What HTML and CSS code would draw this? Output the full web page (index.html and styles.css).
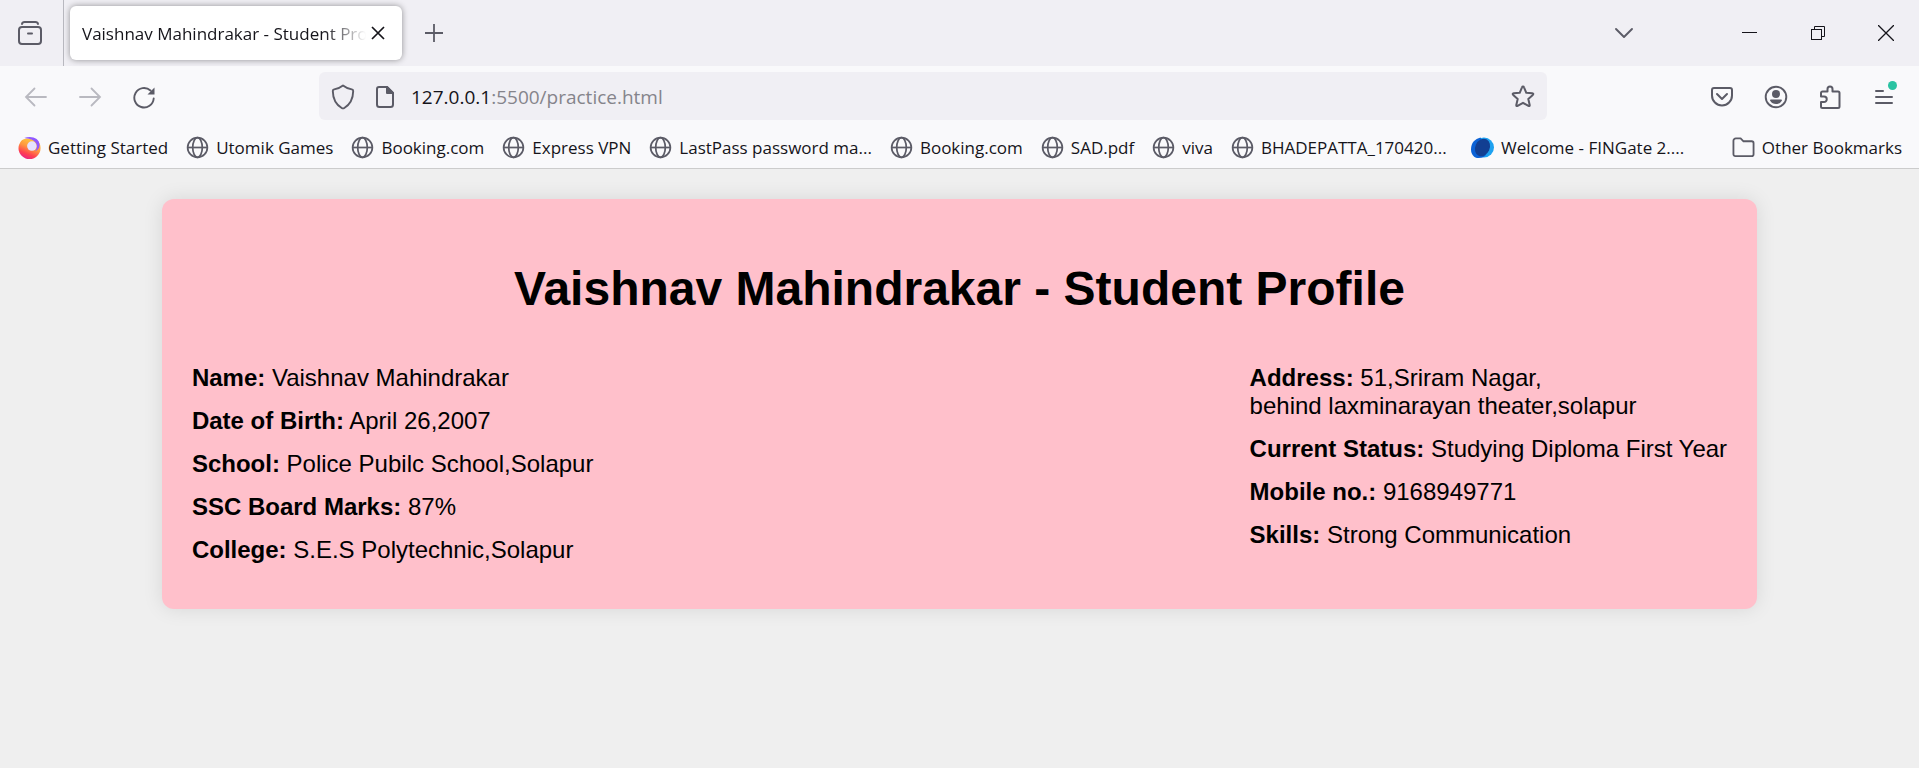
FILE: index.html
```html
<!DOCTYPE html>
<html lang="en">
<head>
<meta charset="utf-8">
<meta name="viewport" content="width=device-width, initial-scale=1">
<title>Vaishnav Mahindrakar - Student Profile</title>
<link rel="stylesheet" href="styles.css">
</head>
<body>
<svg class="defs" aria-hidden="true">
  <symbol id="globe" viewBox="0 0 24 24"><g fill="none" stroke="currentColor" stroke-width="1.8"><circle cx="12" cy="12" r="10.3"/><ellipse cx="12" cy="12" rx="5" ry="10.3"/><path d="M2 12h20"/></g></symbol>
</svg>
<header class="browser">
  <div class="tabbar">
    <button class="icon-btn view" aria-label="Firefox View"><svg width="24" height="24" viewBox="0 0 24 24" fill="none" stroke="currentColor" stroke-width="2" stroke-linecap="round"><path d="M4 3c.3-1.500 1.200-2 2.500-2h11c1.300 0 2.200.5 2.500 2"/><rect x="1" y="6" width="22" height="17" rx="3"/><path d="M10 12.500h4"/></svg></button>
    <div class="tab">
      <span class="tab-title">Vaishnav Mahindrakar - Student Profile</span>
      <button class="tab-close" aria-label="Close tab"><svg width="14" height="14" viewBox="0 0 14 14" fill="none" stroke="currentColor" stroke-width="1.700"><path d="M1 1l12 12M13 1L1 13"/></svg></button>
    </div>
    <button class="icon-btn new-tab" aria-label="New tab"><svg width="18" height="18" viewBox="0 0 18 18" fill="none" stroke="currentColor" stroke-width="1.800"><path d="M9 0v18M0 9h18"/></svg></button>
    <div class="window-controls">
      <button class="icon-btn list-tabs" aria-label="List all tabs"><svg width="20" height="12" viewBox="0 0 20 12" fill="none" stroke="currentColor" stroke-width="1.900" stroke-linecap="round" stroke-linejoin="round"><path d="M2 2l8 8 8-8"/></svg></button>
      <button class="win-btn" aria-label="Minimize"><svg width="16" height="16" viewBox="0 0 16 16" fill="none" stroke="currentColor"><path d="M1 7.500h15"/></svg></button>
      <button class="win-btn" aria-label="Restore"><svg width="16" height="16" viewBox="0 0 16 16" fill="none" stroke="currentColor"><rect x="1.500" y="4.500" width="10" height="10"/><path d="M4.500 4.500v-3h10v10h-3"/></svg></button>
      <button class="win-btn" aria-label="Close"><svg width="16" height="16" viewBox="0 0 16 16" fill="none" stroke="currentColor" stroke-width="1.300"><path d="M0 0l16 16M16 0L0 16"/></svg></button>
    </div>
  </div>
  <div class="toolbar">
    <div class="nav">
      <button class="icon-btn off" aria-label="Back"><svg width="24" height="24" viewBox="0 0 24 24" fill="none" stroke="currentColor" stroke-width="1.800" stroke-linecap="round"><path d="M22 12H2M10.500 3.500L2 12l8.500 8.500"/></svg></button>
      <button class="icon-btn off" aria-label="Forward"><svg width="24" height="24" viewBox="0 0 24 24" fill="none" stroke="currentColor" stroke-width="1.800" stroke-linecap="round"><path d="M2 12h20M13.500 3.500L22 12l-8.500 8.500"/></svg></button>
      <button class="icon-btn" aria-label="Reload"><svg width="24" height="24" viewBox="0 0 24 24" fill="none" stroke="currentColor" stroke-width="1.900" stroke-linecap="round"><path d="M18.500 5.500A9.700 9.700 0 1 0 21.700 13.500"/><path d="M22.500 2.500v7h-7z" fill="currentColor" stroke="none"/></svg></button>
    </div>
    <div class="urlbar">
      <svg width="24" height="26" viewBox="0 0 24 26" fill="none" stroke="currentColor" stroke-width="1.900" stroke-linejoin="round"><path d="M12 1.500C9 3.900 5.500 5 3.200 5.400Q1.800 5.700 1.800 7C1.900 14.500 5 20.500 10.700 24Q12 24.800 13.300 24C19 20.500 22.100 14.500 22.200 7Q22.200 5.700 20.800 5.400C18.500 5 15 3.900 12 1.500z"/></svg>
      <svg width="20" height="24" viewBox="0 0 20 24" fill="none" stroke="currentColor" stroke-width="2" stroke-linejoin="round"><path d="M4 2h8l6 6v11.500a2.500 2.500 0 0 1-2.500 2.500h-11A2.500 2.500 0 0 1 2 19.500V4a2 2 0 0 1 2-2z"/><path d="M12 2v6h6z" fill="currentColor"/></svg>
      <a class="url" href="#">127.0.0.1<span class="url-rest">:5500/practice.html</span></a>
      <button class="star" aria-label="Bookmark this page"><svg width="24" height="24" viewBox="0 0 24 24" fill="none" stroke="currentColor" stroke-width="2" stroke-linejoin="round"><path d="M12 1.500q.7 0 1 .8l2.300 5.500 6 .5q1.700.3.500 1.600l-4.500 4 1.400 6q.2 1.700-1.300 1L12 17.800l-5.400 3.100q-1.500.7-1.300-1l1.400-6-4.500-4q-1.200-1.300.5-1.600l6-.5L11 2.300q.3-.8 1-.8z"/></svg></button>
    </div>
    <div class="actions">
      <button class="icon-btn" aria-label="Save to Pocket"><svg width="24" height="24" viewBox="0 0 24 24" fill="none" stroke="currentColor" stroke-width="2" stroke-linecap="round" stroke-linejoin="round"><path d="M4 3h16a2 2 0 0 1 2 2v5.500a10 10 0 0 1-20 0V5a2 2 0 0 1 2-2z"/><path d="M7 9l5 5 5-5"/></svg></button>
      <button class="icon-btn" aria-label="Account"><svg width="24" height="24" viewBox="0 0 24 24" fill="currentColor"><circle cx="12" cy="12" r="10.300" fill="none" stroke="currentColor" stroke-width="1.900"/><circle cx="12" cy="9" r="4"/><path d="M7 14.500h10q1.500 0 .8 1.200C16.500 18 14.500 19 12 19s-4.500-1-5.800-3.300Q5.500 14.500 7 14.500z"/></svg></button>
      <button class="icon-btn" aria-label="Extensions"><svg width="24" height="26" viewBox="0 0 24 26" fill="none" stroke="currentColor" stroke-width="2" stroke-linejoin="round"><path d="M9.500 7.500V5a2.500 2.500 0 0 1 5 0v2.500H20a1.500 1.500 0 0 1 1.500 1.500v13.500A1.500 1.500 0 0 1 20 24H4.500A1.500 1.500 0 0 1 3 22.500V18h3a2.500 2.500 0 0 0 0-5.500H3V9a1.500 1.500 0 0 1 1.500-1.500z"/></svg></button>
      <button class="icon-btn menu" aria-label="Application menu"><svg width="20" height="18" viewBox="0 0 20 18" fill="none" stroke="currentColor" stroke-width="2" stroke-linecap="round"><path d="M2 3h7M2 9h16M2 15h16"/></svg><span class="badge"></span></button>
    </div>
  </div>
  <nav class="bookmarks" aria-label="Bookmarks">
    <a href="#"><svg viewBox="0 0 24 24"><defs><linearGradient id="fox" x1=".75" y1="0" x2=".3" y2="1"><stop offset="0" stop-color="#ffd43c"/><stop offset=".45" stop-color="#ff9640"/><stop offset=".75" stop-color="#ff4050"/><stop offset="1" stop-color="#e8208a"/></linearGradient></defs><path d="M4 4.500C7 2.500 11 2 14 3.500c6 0 9.500 3.500 9.500 8.500A11.500 11.500 0 1 1 4 4.500z" fill="url(#fox)"/><circle cx="14.500" cy="10.500" r="5" fill="#e6e2ff"/><path d="M6.500 2.200C14-.8 23 2.500 22.500 10c-.3 3-2 5-4.500 6 2-3 2.500-6.500.5-9C15.500 3.500 11 2.600 6.500 2.200z" fill="#9059ff"/></svg><span>Getting Started</span></a>
    <a href="#"><svg><use href="#globe"/></svg><span>Utomik Games</span></a>
    <a href="#"><svg><use href="#globe"/></svg><span>Booking.com</span></a>
    <a href="#"><svg><use href="#globe"/></svg><span>Express VPN</span></a>
    <a href="#"><svg><use href="#globe"/></svg><span class="long">LastPass password ma...</span></a>
    <a href="#"><svg><use href="#globe"/></svg><span>Booking.com</span></a>
    <a href="#"><svg><use href="#globe"/></svg><span>SAD.pdf</span></a>
    <a href="#"><svg><use href="#globe"/></svg><span>viva</span></a>
    <a href="#"><svg><use href="#globe"/></svg><span class="long">BHADEPATTA_170420...</span></a>
    <a href="#"><svg viewBox="0 0 24 24"><circle cx="13.500" cy="12" r="10.500" fill="#1da1f0"/><path d="M10 1.500C4 3 0 7 0 14c0 5 3 9 8 9 4 0 7-2 8-4z" fill="#0b62d6"/><ellipse cx="12" cy="12" rx="7.500" ry="9.500" transform="rotate(25 12 12)" fill="#123f92"/></svg><span class="long">Welcome - FINGate 2....</span></a>
    <a class="other" href="#"><svg viewBox="0 0 24 24" fill="none" stroke="currentColor" stroke-width="1.900" stroke-linejoin="round"><path d="M4 2.500h5l3 3h8.500a2 2 0 0 1 2 2v11.500a2 2 0 0 1-2 2h-17a2 2 0 0 1-2-2V5A2.500 2.500 0 0 1 4 2.500z"/></svg><span>Other Bookmarks</span></a>
  </nav>
</header>
<main class="profile">
  <h1>Vaishnav Mahindrakar - Student Profile</h1>
  <div class="columns">
    <section>
      <p><strong>Name:</strong> Vaishnav Mahindrakar</p>
      <p><strong>Date of Birth:</strong> April 26,2007</p>
      <p><strong>School:</strong> Police Pubilc School,Solapur</p>
      <p><strong>SSC Board Marks:</strong> 87%</p>
      <p><strong>College:</strong> S.E.S Polytechnic,Solapur</p>
    </section>
    <section>
      <p><strong>Address:</strong> 51,Sriram Nagar,<br>behind laxminarayan theater,solapur</p>
      <p><strong>Current Status:</strong> Studying Diploma First Year</p>
      <p><strong>Mobile no.:</strong> 9168949771</p>
      <p><strong>Skills:</strong> Strong Communication</p>
    </section>
  </div>
</main>
</body>
</html>
```
FILE: styles.css
```css
body {
  margin: 0;
  background: #efefef;
  color: #000;
  font-family: "Liberation Sans", Arial, sans-serif;
}
button {
  padding: 0;
  border: 0;
  background: none;
  color: inherit;
  font: inherit;
}
svg { display: block; flex: none; }
.defs { position: absolute; width: 0; height: 0; }

.browser {
  background: #f9f9fb;
  border-bottom: 1px solid #ccc;
  color: #5b5b66;
  font-family: "Open Sans", "Noto Sans", sans-serif;
  font-size: 17px;
}
.icon-btn {
  display: flex;
  align-items: center;
  justify-content: center;
  width: 54px;
  height: 48px;
}
.tabbar {
  display: flex;
  align-items: center;
  height: 66px;
  background: #f0eff4;
}
.view {
  flex: none;
  width: 64px;
  height: 66px;
  padding-right: 4px;
  border-right: 1px solid #b8b8bf;
}
.tab {
  display: flex;
  align-items: center;
  box-sizing: border-box;
  width: 332px;
  height: 54px;
  margin-left: 6px;
  padding: 0 17px 0 12px;
  gap: 5px;
  border-radius: 6px;
  background: #fff;
  box-shadow: 0 0 6px rgba(0, 0, 0, .4);
  color: #15141a;
}
.tab-title {
  flex: 1;
  overflow: hidden;
  white-space: nowrap;
  -webkit-mask-image: linear-gradient(to left, transparent, #000 42px);
  mask-image: linear-gradient(to left, transparent, #000 42px);
}
.new-tab { width: 64px; }
.window-controls {
  display: flex;
  align-items: center;
  margin-left: auto;
  color: #15141a;
}
.list-tabs { margin-right: 63px; color: #5b5b66; }
.win-btn {
  display: flex;
  align-items: center;
  justify-content: center;
  width: 69px;
  height: 48px;
}
.win-btn:last-child { width: 67px; }

.toolbar {
  display: flex;
  align-items: center;
  padding: 6px 8px 6px 9px;
}
.toolbar .icon-btn { padding-top: 2px; }
.nav { display: flex; flex: 310; }
.off { color: #b9b9c0; }
.urlbar {
  display: flex;
  align-items: center;
  box-sizing: border-box;
  flex: 1204;
  height: 48px;
  padding: 2px 12px 0;
  gap: 20px;
  border-radius: 6px;
  background: #f0eff4;
}
.url {
  flex: 1;
  margin-left: -4px;
  color: #15141a;
  font-size: 19px;
  text-decoration: none;
}
.url-rest { color: #85848b; }
.actions { display: flex; flex: 364; justify-content: flex-end; }
.menu { position: relative; }
.badge {
  position: absolute;
  top: 9px;
  right: 14px;
  width: 9px;
  height: 9px;
  border-radius: 50%;
  background: #2ac3a2;
}

.bookmarks {
  display: flex;
  align-items: center;
  height: 42px;
  padding: 0 17px 0 18px;
  box-sizing: border-box;
  gap: 18px;
}
.bookmarks a {
  display: flex;
  align-items: center;
  gap: 7px;
  color: #5b5b66;
  text-decoration: none;
  white-space: nowrap;
}
.bookmarks svg { width: 23px; height: 23px; }
.bookmarks span { color: #15141a; }
.bookmarks .long { min-width: 192px; }
.bookmarks .other { margin-left: auto; }

.profile {
  width: 80%;
  margin: 30px auto;
  padding: 30px;
  border-radius: 12px;
  background: pink;
  box-shadow: 0 0 20px rgba(0, 0, 0, .1);
}
.profile h1 {
  margin: 32px 0 33px;
  font-size: 48px;
  line-height: 55px;
  text-align: center;
}
.columns {
  display: flex;
  justify-content: space-between;
  font-size: 24px;
  line-height: 28px;
}
.columns p { margin: 15px 0; }
```
